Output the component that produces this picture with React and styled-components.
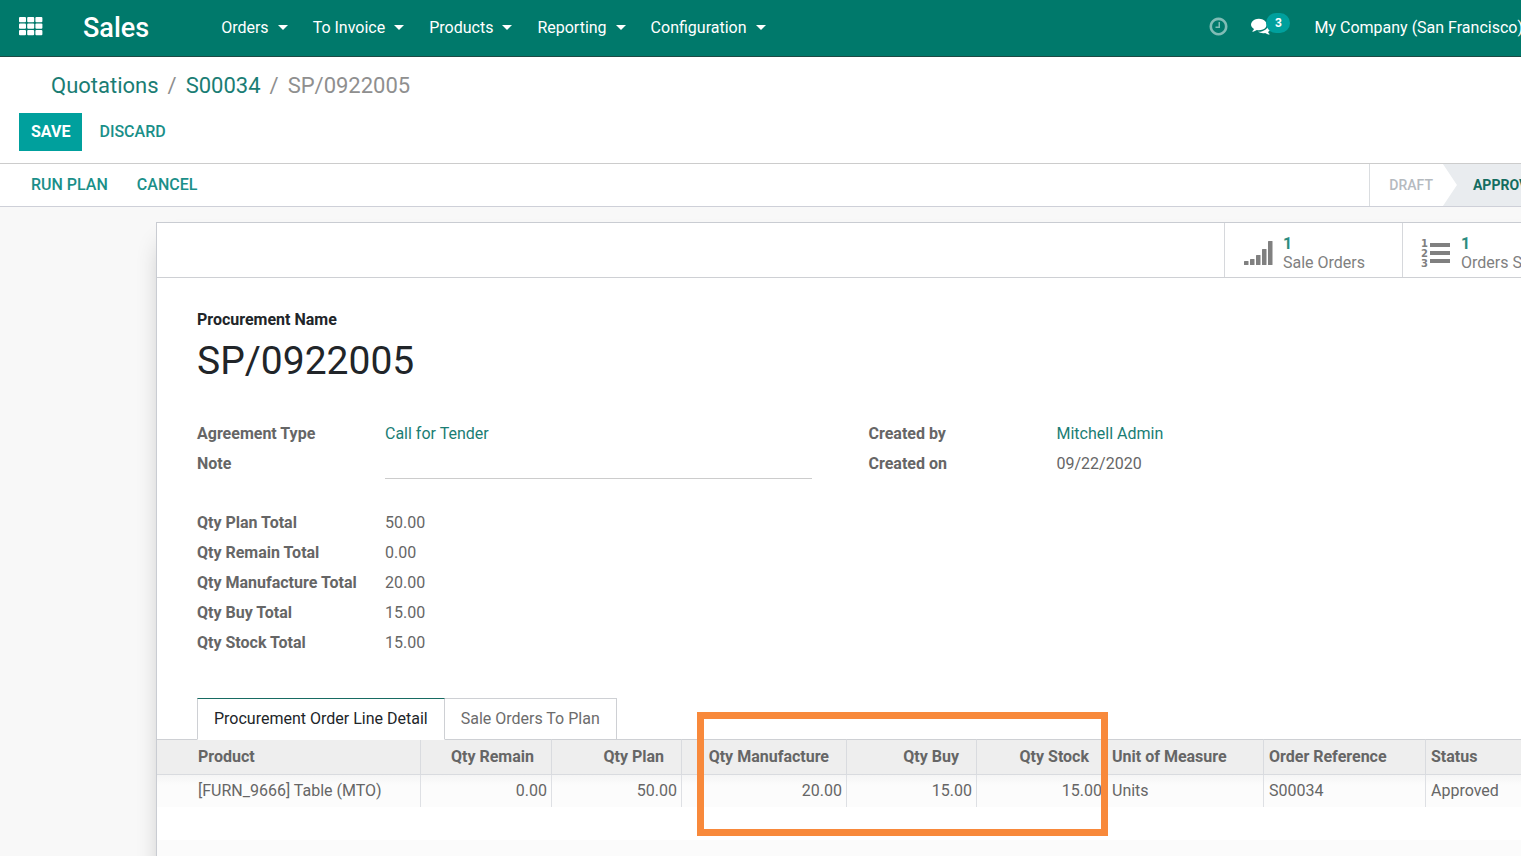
import React from "react";
import styled, { createGlobalStyle } from "styled-components";

const Global = createGlobalStyle`
  * { box-sizing: border-box; }
  body { margin: 0; background: #f8f8f8; }
  button, input { font: inherit; }
`;

const Page = styled.div`
  min-height: 100vh;
  display: flex;
  flex-direction: column;
  overflow: hidden;
  font: 16px/24px Roboto, sans-serif;
  color: #666666;
`;

const Navbar = styled.header`
  display: flex;
  align-items: center;
  height: 57px;
  padding-left: 19px;
  background: #00796b;
  border-bottom: 1px solid #1d4a44;
  color: #ffffff;
  white-space: nowrap;
`;

const IconButton = styled.button`
  position: relative;
  display: flex;
  padding: 0 0 4px;
  border: 0;
  background: none;
  color: inherit;
`;

const Brand = styled.a`
  margin: 0 60px 0 40px;
  font-size: 27px;
  font-weight: 500;
  line-height: 32px;
  color: inherit;
  text-decoration: none;
`;

const Menu = styled.nav`
  display: flex;
  padding: 0 12px;
`;

const MenuItem = styled.button`
  display: flex;
  align-items: center;
  padding: 0;
  margin-right: 25px;
  border: 0;
  background: none;
  color: inherit;

  &::after {
    content: "";
    margin: -2px 0 0 9px;
    border: 5px solid transparent;
    border-top-color: currentColor;
    border-bottom: 0;
  }
`;

const Systray = styled.div`
  display: flex;
  align-items: center;
  gap: 22px;
  margin: 0 -2px 0 auto;
`;

const Badge = styled.span`
  position: absolute;
  left: 15px;
  top: -3px;
  width: 24px;
  border-radius: 10px;
  background: #00a09d;
  font-size: 12px;
  font-weight: 700;
  line-height: 20px;
  text-align: center;
`;

const Company = styled.button`
  margin-left: 21px;
  padding: 0;
  border: 0;
  background: none;
  color: inherit;
`;

const ControlPanel = styled.section`
  height: 107px;
  padding: 13px 19px 12px;
  border-bottom: 1px solid #cccccc;
  background: #ffffff;
`;

const Breadcrumb = styled.nav`
  display: flex;
  gap: 9px;
  padding-left: 32px;
  font-size: 22px;
  line-height: 32px;
  color: #8f8f8f;
`;

const Link = styled.a`
  color: #1a7d74;
  text-decoration: none;
`;

const Actions = styled.div`
  display: flex;
  gap: 5px;
  margin-top: 11px;
`;

const Button = styled.button`
  height: 38px;
  padding: 0 12px;
  border: 0;
  background: ${(p) => (p.$primary ? "#00a09d" : "none")};
  color: ${(p) => (p.$primary ? "#ffffff" : "#1a8f89")};
  font-weight: ${(p) => (p.$primary ? 700 : 500)};
  text-transform: uppercase;
`;

const StatusBar = styled.section`
  display: flex;
  align-items: center;
  gap: 5px;
  height: 43px;
  padding-left: 19px;
  border-bottom: 1px solid #ced0d8;
  background: #ffffff;
`;

const Steps = styled.div`
  display: flex;
  align-self: stretch;
  margin: 0 -40px 0 auto;
  border-left: 1px solid #dadde0;
`;

const Step = styled.button`
  padding: 0 10px 0 19px;
  border: 0;
  background: none;
  color: #b5babf;
  font-size: 14px;
  font-weight: 500;
  text-transform: uppercase;

  ${(p) =>
    p.$active &&
    `
    padding: 0 16px 0 30px;
    background: #e9ecef;
    color: #146c60;
    font-weight: 700;
    clip-path: polygon(0 0, 100% 0, 100% 100%, 0 100%, 14px 50%);
  `}
`;

const Sheet = styled.main`
  flex: 1;
  margin: 15px -60px 0 156px;
  border: 1px solid #c9ccd2;
  border-bottom: 0;
  background: #ffffff;
  box-shadow: 0 16px 24px -8px rgba(0, 0, 0, 0.3);
`;

const ButtonBox = styled.div`
  display: flex;
  justify-content: flex-end;
  height: 55px;
  border-bottom: 1px solid #ced0d4;
`;

const StatButton = styled.button`
  display: flex;
  align-items: center;
  flex: 0 0 178px;
  gap: 10px;
  padding: 5px 0 0 18px;
  border: 0;
  border-left: 1px solid #d6d8dc;
  background: none;
  color: #808080;
  text-align: left;
  line-height: 19px;
`;

const StatValue = styled.strong`
  display: block;
  color: #2c8c80;
  font-weight: 700;
`;

const Title = styled.div`
  padding: 30px 40px 0;
  color: #212529;
`;

const NameLabel = styled.div`
  font-weight: 700;
`;

const Name = styled.h1`
  margin: 5px 0 0;
  font-size: 39px;
  font-weight: 400;
  line-height: 48px;
`;

const Columns = styled.div`
  display: grid;
  grid-template-columns: 1fr 1fr;
  margin: 34px 40px 0;
`;

const Group = styled.div`
  display: grid;
  grid-template-columns: 188px 427px;
  grid-auto-rows: 30px;
  align-content: start;
  align-items: center;
`;

const TotalsGroup = styled(Group)`
  margin: 29px 40px 0;
`;

const Label = styled.label`
  color: #666666;
  font-weight: 700;
`;

const NoteInput = styled.input`
  width: 100%;
  height: 30px;
  padding: 0;
  border: 0;
  border-bottom: 1px solid #cccccc;
  background: none;
  outline: 0;
`;

const Tabs = styled.div`
  display: flex;
  margin: 40px 40px -1px;
`;

const Tab = styled.button`
  height: 42px;
  margin-left: ${(p) => (p.$active ? "0" : "-1px")};
  padding: 0 16px;
  border: 1px solid #ced0d4;
  border-top-color: ${(p) => (p.$active ? "#176b62" : "#ced0d4")};
  border-bottom-color: ${(p) => (p.$active ? "#ffffff" : "#ced0d4")};
  background: #ffffff;
  color: ${(p) => (p.$active ? "#212529" : "#6c6c6c")};
  position: relative;
  z-index: ${(p) => (p.$active ? 1 : 0)};
`;

const TableArea = styled.div`
  position: relative;
`;

const Table = styled.table`
  width: 100%;
  table-layout: fixed;
  border-collapse: separate;
  border-spacing: 0;
  white-space: nowrap;
`;

const HeadCell = styled.th`
  height: 36px;
  padding: 0 ${(p) => (p.$numeric ? "17px" : "4px")} 0 ${(p) => (p.$first ? "41px" : "5px")};
  border: 1px solid #d9dbdf;
  border-width: 1px ${(p) => (p.$open ? "0" : "1px")} 1px 0;
  border-top-color: #ced0d4;
  background: #eeeeee;
  color: #666666;
  font-weight: 700;
  text-align: ${(p) => (p.$numeric ? "right" : "left")};
`;

const Cell = styled.td`
  height: 32px;
  padding: 0 4px 0 ${(p) => (p.$first ? "41px" : "5px")};
  border-right: ${(p) => (p.$open ? "0" : "1px solid #dee0e4")};
  background: linear-gradient(#f5f5f5, #fcfcfc 10px);
  text-align: ${(p) => (p.$numeric ? "right" : "left")};
`;

const BlankCell = styled.td`
  height: 33px;
  padding: 0;
  background: ${(p) => (p.$striped ? "#fbfbfb" : "#ffffff")};
`;

const Highlight = styled.div`
  position: absolute;
  left: 540px;
  top: -27px;
  width: 411px;
  height: 124px;
  border: 7px solid #f8893b;
  pointer-events: none;
`;

const AppsIcon = () => (
  <svg width="24" height="19" viewBox="0 0 24 19" fill="currentColor" aria-hidden="true">
    {[0, 6.5, 13].map((y) =>
      [0, 8.200, 16.400].map((x) => <rect key={`${x}-${y}`} x={x} y={y} width="7" height="5.200" rx="1" />)
    )}
  </svg>
);

const ClockIcon = () => (
  <svg width="21" height="21" viewBox="0 0 1792 1792" fill="#80bcb5" aria-hidden="true">
    <path d="M1024 544v448q0 14-9 23t-23 9h-320q-14 0-23-9t-9-23v-64q0-14 9-23t23-9h224v-352q0-14 9-23t23-9h64q14 0 23 9t9 23zm416 352q0-148-73-273t-198-198-273-73-273 73-198 198-73 273 73 273 198 198 273 73 273-73 198-198 73-273zm224 0q0 209-103 385.500t-279.500 279.500-385.500 103-385.500-103-279.500-279.500-103-385.500 103-385.500 279.500-279.500 385.500-103 385.500 103 279.500 279.500 103 385.500z" />
  </svg>
);

const ChatIcon = () => (
  <svg width="20" height="20" viewBox="0 0 1792 1792" fill="currentColor" aria-hidden="true">
    <path d="M1408 768q0 139-94 257t-256.500 186.500-353.500 68.500q-86 0-176-16-124 88-278 128-36 9-86 16h-3q-11 0-20.500-8t-11.500-21q-1-3-1-6.500t.5-6.500 2-6l2.500-5t3.500-5.500 4-5 4.500-5 4-4.500q5-6 23-25t26-29.500 22.500-29 25-38.500 20.500-44q-124-72-195-177t-71-224q0-139 94-257t256.500-186.500 353.500-68.500 353.500 68.500 256.500 186.500 94 257zm384 256q0 120-71 224.500t-195 176.500q10 24 20.500 44t25 38.500 22.500 29 26 29.500 23 25q1 1 4 4.500t4.500 5 4 5 3.500 5.500l2.500 5t2 6 .5 6.500-1 6.500q-3 14-13 22t-22 7q-50-7-86-16-154-40-278-128-90 16-176 16-271 0-472-132 58 4 88 4 161 0 309-45t264-129q125-92 192-212t67-254q0-77-23-152 129 71 204 178t75 230z" />
  </svg>
);

const SignalIcon = () => (
  <svg width="30" height="30" viewBox="0 0 30 30" fill="currentColor" aria-hidden="true">
    {[4, 6, 10, 16, 24].map((h, i) => (
      <rect key={h} x={1 + i * 6} y={27 - h} width="4.500" height={h} rx="0.5" />
    ))}
  </svg>
);

const ListIcon = () => (
  <svg width="30" height="30" viewBox="0 0 30 30" fill="currentColor" aria-hidden="true">
    {[1, 2, 3].map((n) => (
      <g key={n}>
        <text x="0" y={n * 10 - 1} fontFamily="DejaVu Sans, sans-serif" fontSize="10" fontWeight="700">{n}</text>
        <rect x="9" y={n * 8 - 3} width="20" height="4" />
      </g>
    ))}
  </svg>
);

const menus = ["Orders", "To Invoice", "Products", "Reporting", "Configuration"];

const totals = [
  ["Qty Plan Total", "50.00"],
  ["Qty Remain Total", "0.00"],
  ["Qty Manufacture Total", "20.00"],
  ["Qty Buy Total", "15.00"],
  ["Qty Stock Total", "15.00"],
];

const columns = [
  { title: "Product", value: "[FURN_9666] Table (MTO)", width: 264, first: true },
  { title: "Qty Remain", value: "0.00", width: 131, numeric: true },
  { title: "Qty Plan", value: "50.00", width: 130, numeric: true },
  { title: "Qty Manufacture", value: "20.00", width: 165, numeric: true },
  { title: "Qty Buy", value: "15.00", width: 130, numeric: true },
  { title: "Qty Stock", value: "15.00", width: 130, numeric: true },
  { title: "Unit of Measure", value: "Units", width: 157 },
  { title: "Order Reference", value: "S00034", width: 162 },
  { title: "Status", value: "Approved", open: true },
];

export default function App() {
  return (
    <Page>
      <Global />
      <Navbar>
        <IconButton aria-label="Applications"><AppsIcon /></IconButton>
        <Brand href="#">Sales</Brand>
        <Menu>
          {menus.map((m) => <MenuItem key={m}>{m}</MenuItem>)}
        </Menu>
        <Systray>
          <IconButton aria-label="Activities"><ClockIcon /></IconButton>
          <IconButton aria-label="Conversations">
            <ChatIcon />
            <Badge>3</Badge>
          </IconButton>
          <Company>My Company (San Francisco)</Company>
        </Systray>
      </Navbar>

      <ControlPanel>
        <Breadcrumb aria-label="Breadcrumb">
          <Link href="#">Quotations</Link>
          <span>/</span>
          <Link href="#">S00034</Link>
          <span>/</span>
          <span>SP/0922005</span>
        </Breadcrumb>
        <Actions>
          <Button $primary>Save</Button>
          <Button>Discard</Button>
        </Actions>
      </ControlPanel>

      <StatusBar>
        <Button>Run Plan</Button>
        <Button>Cancel</Button>
        <Steps>
          <Step>Draft</Step>
          <Step $active>Approved</Step>
        </Steps>
      </StatusBar>

      <Sheet>
        <ButtonBox>
          <StatButton>
            <SignalIcon />
            <span><StatValue>1</StatValue>Sale Orders</span>
          </StatButton>
          <StatButton>
            <ListIcon />
            <span><StatValue>1</StatValue>Orders S</span>
          </StatButton>
        </ButtonBox>

        <Title>
          <NameLabel>Procurement Name</NameLabel>
          <Name>SP/0922005</Name>
        </Title>

        <Columns>
          <Group>
            <Label as="span">Agreement Type</Label>
            <Link href="#">Call for Tender</Link>
            <Label htmlFor="note">Note</Label>
            <NoteInput id="note" />
          </Group>
          <Group>
            <Label as="span">Created by</Label>
            <Link href="#">Mitchell Admin</Link>
            <Label as="span">Created on</Label>
            <span>09/22/2020</span>
          </Group>
        </Columns>

        <TotalsGroup>
          {totals.map(([label, value]) => (
            <React.Fragment key={label}>
              <Label as="span">{label}</Label>
              <span>{value}</span>
            </React.Fragment>
          ))}
        </TotalsGroup>

        <Tabs role="tablist">
          <Tab role="tab" aria-selected="true" $active>Procurement Order Line Detail</Tab>
          <Tab role="tab" aria-selected="false">Sale Orders To Plan</Tab>
        </Tabs>

        <TableArea>
          <Table>
            <colgroup>
              {columns.map((c) => <col key={c.title} width={c.width} />)}
            </colgroup>
            <thead>
              <tr>
                {columns.map((c) => (
                  <HeadCell key={c.title} $first={c.first} $numeric={c.numeric} $open={c.open}>{c.title}</HeadCell>
                ))}
              </tr>
            </thead>
            <tbody>
              <tr>
                {columns.map((c) => (
                  <Cell key={c.title} $first={c.first} $numeric={c.numeric} $open={c.open}>{c.value}</Cell>
                ))}
              </tr>
              <tr><BlankCell colSpan={9} /></tr>
              <tr><BlankCell colSpan={9} $striped /></tr>
            </tbody>
          </Table>
          <Highlight />
        </TableArea>
      </Sheet>
    </Page>
  );
}
